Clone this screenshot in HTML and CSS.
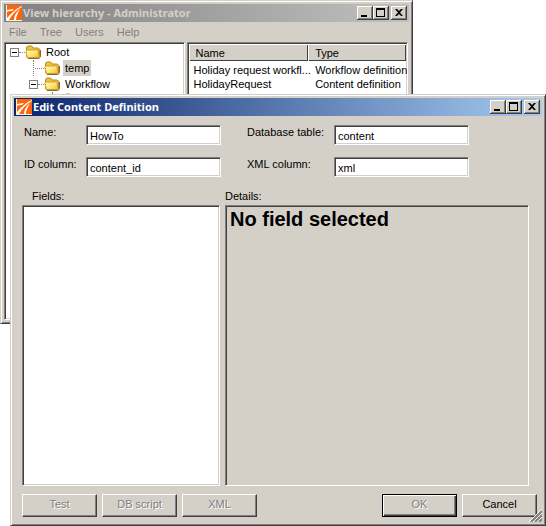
FILE: index.html
```
<!DOCTYPE html>
<html lang="en">
<head>
    <meta charset="UTF-8">
    <meta name="viewport" content="width=device-width, initial-scale=1.0">
    <title>Edit Content Definition</title>
    <link rel="stylesheet" href="styles.css">
</head>
<body>
    <!-- Shared icons -->
    <svg class="sprites" aria-hidden="true">
        <linearGradient id="gold" x1="0" y1="0" x2="1" y2="1">
            <stop offset="0" stop-color="#fff8c0"/>
            <stop offset="0.5" stop-color="#ffe880"/>
            <stop offset="1" stop-color="#f0b830"/>
        </linearGradient>
        <symbol id="logo" viewBox="0 0 16 16">
            <rect width="16" height="16" fill="#fff0e0"/>
            <rect x="1" y="0" width="15" height="15" fill="#ff6408"/>
            <path d="M1 15V13C5 9 9 4 16 1V2C10 5 6 10 3 15Z" fill="#fff"/>
            <path d="M1 5C3 5 5 4 8 4L6 6C4 6 2 6 1 7Z" fill="#fff"/>
            <path d="M8 15C8 11 10 7 14 4C12 8 10 11 10 15Z" fill="#fff"/>
        </symbol>
        <symbol id="folder" viewBox="0 0 16 14">
            <path d="M1.5 3Q1.5 1 3.5 1H6Q7.500 1 8 3H12.5Q14.500 3 14.500 5V11Q14.500 13 12.500 13H3.500Q1.500 13 1.500 11Z" fill="#f0c040" stroke="#c08818"/>
            <path d="M1 6.500Q1 5 2.500 5H11.500Q13 5 13 6.500L14 11.500Q14 12.500 13 12.500H3.500Q2 12.500 2 11.500Z" fill="url(#gold)" stroke="#d8a020"/>
            <path d="M3 13.500H13.500Q15.500 13 15.500 11V5" fill="none" stroke="#806838"/>
        </symbol>
        <symbol id="minimize" viewBox="0 0 16 14">
            <path d="M4 9H10V11H4Z"/>
        </symbol>
        <symbol id="maximize" viewBox="0 0 16 14">
            <path d="M3 2H12V11H3ZM4 4V10H11V4Z" fill-rule="evenodd"/>
        </symbol>
        <symbol id="close" viewBox="0 0 16 14">
            <path d="M4 3H6L8 5L10 3H12L9 6.500L12 10H10L8 8L6 10H4L7 6.500Z"/>
        </symbol>
    </svg>

    <main class="desktop">
        <section class="window hierarchy">
            <header class="title-bar inactive">
                <svg class="logo"><use href="#logo"/></svg>
                <h1>View hierarchy - Administrator</h1>
                <div class="controls">
                    <button aria-label="Minimize"><svg><use href="#minimize"/></svg></button>
                    <button aria-label="Maximize"><svg><use href="#maximize"/></svg></button>
                    <button class="close" aria-label="Close"><svg><use href="#close"/></svg></button>
                </div>
            </header>
            <nav class="menu">
                <a href="#">File</a>
                <a href="#">Tree</a>
                <a href="#">Users</a>
                <a href="#">Help</a>
            </nav>
            <div class="browser">
                <ul class="tree sunken">
                    <li class="node">
                        <span class="toggle"></span><span class="stub"></span><svg class="folder"><use href="#folder"/></svg><span class="name">Root</span>
                    </li>
                    <li class="node child">
                        <span class="branch"></span><svg class="folder"><use href="#folder"/></svg><span class="name selected">temp</span>
                    </li>
                    <li class="node child">
                        <span class="toggle"></span><span class="stub"></span><svg class="folder"><use href="#folder"/></svg><span class="name">Workflow</span>
                    </li>
                    <li class="node grandchild">
                        <span class="branch"></span><svg class="folder"><use href="#folder"/></svg>
                    </li>
                </ul>
                <div class="list sunken">
                    <table>
                        <thead>
                            <tr><th class="name-column">Name</th><th>Type</th></tr>
                        </thead>
                        <tbody>
                            <tr><td>Holiday request workfl...</td><td>Workflow definition</td></tr>
                            <tr><td>HolidayRequest</td><td>Content definition</td></tr>
                            <tr><td>example</td><td>Workflow definition</td></tr>
                        </tbody>
                    </table>
                </div>
            </div>
        </section>

        <section class="window editor">
            <header class="title-bar">
                <svg class="logo"><use href="#logo"/></svg>
                <h2>Edit Content Definition</h2>
                <div class="controls">
                    <button aria-label="Minimize"><svg><use href="#minimize"/></svg></button>
                    <button aria-label="Maximize"><svg><use href="#maximize"/></svg></button>
                    <button class="close" aria-label="Close"><svg><use href="#close"/></svg></button>
                </div>
            </header>
            <form class="content">
                <div class="fields">
                    <label for="name">Name:</label>
                    <input class="sunken" type="text" id="name" value="HowTo">
                    <label class="second" for="table">Database table:</label>
                    <input class="sunken" type="text" id="table" value="content">
                    <label for="id-column">ID column:</label>
                    <input class="sunken" type="text" id="id-column" value="content_id">
                    <label class="second" for="xml-column">XML column:</label>
                    <input class="sunken" type="text" id="xml-column" value="xml">
                </div>
                <div class="panels">
                    <label class="fields-label" for="field-list">Fields:</label>
                    <span>Details:</span>
                    <select class="field-list sunken" id="field-list" size="10"></select>
                    <div class="details sunken">
                        <h3>No field selected</h3>
                    </div>
                </div>
                <div class="buttons">
                    <button type="button" disabled>Test</button>
                    <button type="button" disabled>DB script</button>
                    <button type="button" disabled>XML</button>
                    <button class="ok" type="submit" disabled>OK</button>
                    <button type="button">Cancel</button>
                </div>
            </form>
            <svg class="grip" viewBox="0 0 13 13">
                <path d="M0 13L13 0M4 13L13 4M8 13L13 8" stroke="#fff"/>
                <path d="M2 13L13 2M6 13L13 6M10 13L13 10" stroke="#808080" stroke-width="2"/>
            </svg>
        </section>
    </main>
</body>
</html>
```
FILE: styles.css
```
* {
    box-sizing: border-box;
}
body {
    margin: 0;
    background-color: #fff;
    color: #000;
    font-family: "Liberation Sans", Arial, sans-serif;
    font-size: 11px;
    line-height: 14px;
}
h1, h2, h3, ul {
    margin: 0;
    padding: 0;
}
button, input, select {
    font: inherit;
    color: inherit;
    border-radius: 0;
}
.sprites {
    position: absolute;
    width: 0;
    height: 0;
}
.desktop {
    position: relative;
    height: 100vh;
    overflow: hidden;
}

/* Windows */
.window {
    position: absolute;
    display: flex;
    flex-direction: column;
    padding: 3px;
    background-color: #d4d0c8;
    border: 1px solid;
    border-color: #d4d0c8 #404040 #404040 #d4d0c8;
    box-shadow: inset 1px 1px #fff, inset -1px -1px #808080;
}
.hierarchy {
    top: 0;
    left: 0;
    right: 133px;
    bottom: 202px;
}
.editor {
    top: 94px;
    left: 10px;
    right: 0;
    bottom: 0;
}
.title-bar {
    display: flex;
    align-items: center;
    flex: none;
    height: 18px;
    padding-right: 2px;
    background: linear-gradient(to right, #0a246a, #a6caf0);
    color: #fff;
}
.title-bar.inactive {
    background: linear-gradient(to right, #808080, #c0c0c0);
    color: #d4d0c8;
}
.title-bar h1, .title-bar h2 {
    flex: 1;
    font-family: "Noto Sans", sans-serif;
    font-size: 11px;
    font-weight: bold;
    white-space: nowrap;
}
.logo {
    width: 16px;
    height: 16px;
    margin: 0 1px 0 2px;
}
.controls {
    display: flex;
}
.controls button {
    width: 16px;
    height: 14px;
    padding: 0;
    border: 0;
    background-color: #d4d0c8;
    box-shadow: inset -1px -1px #404040, inset 1px 1px #fff, inset -2px -2px #808080;
}
.controls .close {
    margin-left: 2px;
}
.controls svg {
    display: block;
    width: 16px;
    height: 14px;
}
.sunken {
    border: 1px solid;
    border-color: #808080 #fff #fff #808080;
    box-shadow: inset 1px 1px #404040, inset -1px -1px #d4d0c8;
    background-color: #fff;
}

/* View hierarchy */
.menu {
    display: flex;
    gap: 13px;
    height: 20px;
    padding: 3px 5px;
}
.menu a {
    color: #808080;
    text-decoration: none;
}
.browser {
    display: grid;
    grid-template-columns: 181fr 222fr;
    gap: 2px;
    flex: 1;
    min-height: 0;
    padding: 0 1px 0 0;
}
.tree {
    padding: 1px 5px;
    list-style: none;
    overflow: hidden;
}
.node {
    display: flex;
    align-items: center;
    height: 16px;
}
.child {
    padding-left: 19px;
}
.grandchild {
    padding-left: 38px;
}
.toggle {
    width: 9px;
    height: 9px;
    border: 1px solid #808080;
    background: linear-gradient(#000, #000) center / 5px 1px no-repeat;
}
.stub {
    width: 6px;
    border-top: 1px dotted #808080;
}
.branch {
    align-self: stretch;
    width: 11px;
    margin-left: 4px;
    border-left: 1px dotted #808080;
    background: repeating-linear-gradient(to right, #fff 0 1px, #808080 1px 2px) 0 8px / 100% 1px no-repeat;
}
.folder {
    width: 16px;
    height: 14px;
}
.name {
    padding: 1px 2px;
    margin-left: 3px;
}
.selected {
    background-color: #d4d0c8;
}
.list {
    padding: 1px;
    overflow: hidden;
}
table {
    width: 100%;
    border-collapse: separate;
    border-spacing: 0;
    table-layout: fixed;
}
th, td {
    padding: 0 5px;
    text-align: left;
    font-weight: normal;
    white-space: nowrap;
}
td:last-child {
    padding: 0 0 0 7px;
}
tbody tr:first-child td {
    padding-top: 2px;
}
th {
    height: 17px;
    padding: 0 7px;
    background-color: #d4d0c8;
    box-shadow: inset 1px 1px #fff, inset -1px -1px #404040;
}
.name-column {
    width: 55%;
}

/* Edit content definition */
.content {
    display: flex;
    flex-direction: column;
    flex: 1;
    min-height: 0;
    padding: 9px 5px 5px 8px;
}
.fields {
    display: grid;
    grid-template-columns: 64px 1fr 113px 1fr;
    row-gap: 12px;
    margin-right: 68px;
}
.fields label {
    padding: 0 2px;
}
.fields .second {
    padding-left: 26px;
}
.fields input {
    width: 100%;
    height: 20px;
    padding: 1px 3px 0;
    outline: none;
}
.panels {
    display: grid;
    grid-template-columns: 198fr 304fr;
    grid-template-rows: auto 1fr;
    gap: 2px 5px;
    flex: 1;
    min-height: 0;
    margin: 12px 8px 8px 0;
}
.fields-label {
    padding-left: 10px;
}
.field-list {
    width: 100%;
    height: 100%;
    outline: none;
}
.details {
    padding: 2px 4px;
    background-color: #d4d0c8;
}
.details h3 {
    font-size: 20px;
    line-height: 22px;
}
.buttons {
    display: flex;
    gap: 5px;
}
.buttons button {
    width: 75px;
    height: 23px;
    padding: 0 0 3px;
    border: 1px solid;
    border-color: #fff #404040 #404040 #fff;
    box-shadow: inset -1px -1px #808080;
    background-color: #d4d0c8;
}
.buttons button:disabled {
    color: #808080;
    text-shadow: 1px 1px #fff;
}
.buttons .ok {
    margin-left: auto;
    border-color: #000;
    box-shadow: inset 1px 1px #fff, inset -1px -1px #404040, inset -2px -2px #808080;
}
.grip {
    position: absolute;
    right: 3px;
    bottom: 3px;
    width: 13px;
    height: 13px;
}
```
